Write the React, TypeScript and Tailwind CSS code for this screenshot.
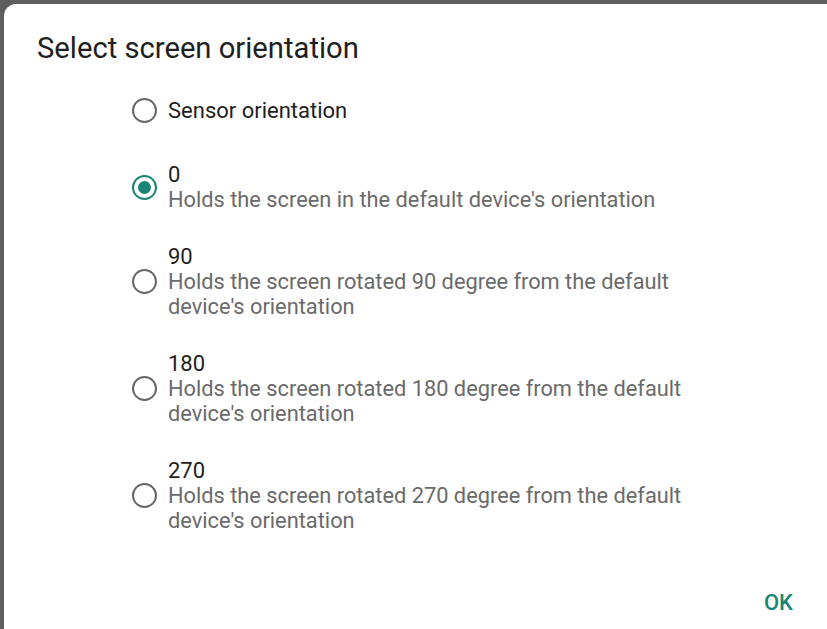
import React from "react";

type Item = { title: string; desc?: string; checked?: boolean };

const items: Item[] = [
  { title: "0", desc: "Holds the screen in the default device's orientation", checked: true },
  { title: "90", desc: "Holds the screen rotated 90 degree from the default device's orientation" },
  { title: "180", desc: "Holds the screen rotated 180 degree from the default device's orientation" },
  { title: "270", desc: "Holds the screen rotated 270 degree from the default device's orientation" },
];

function Radio({ checked }: { checked?: boolean }) {
  return (
    <div
      className={
        "w-[25px] h-[25px] shrink-0 rounded-full border-[2.5px] flex items-center justify-center " +
        (checked ? "border-[#1a8574]" : "border-[#676767]")
      }
    >
      {checked && <div className="w-[13px] h-[13px] rounded-full bg-[#1a8574]" />}
    </div>
  );
}

export default function App() {
  return (
    <div
      className="w-[827px] h-[629px] bg-[#5e5e5e] pt-[4px] pl-[4px] overflow-hidden"
      style={{ fontFamily: "Roboto, 'Noto Sans', sans-serif" }}
    >
      <div className="w-full h-[640px] bg-white rounded-tl-[12px] rounded-bl-[12px] flex flex-col">
        <div className="pl-[33px] pt-[27px] text-[29.2px] leading-[34px] text-[#202020]">
          Select screen orientation
        </div>
        <div className="pl-[128px] pr-[40px] flex flex-col">
          <div className="h-[71px] mt-[10px] flex items-center gap-[11px]">
            <Radio />
            <div className="text-[22px] leading-[25px] text-[#1e1e1e]">Sensor orientation</div>
          </div>
          {items.map((it) => (
            <div key={it.title} className="py-[16px] flex items-center gap-[11px]">
              <Radio checked={it.checked} />
              <div className="flex flex-col max-w-[530px]">
                <div className="text-[22px] leading-[25px] text-[#1e1e1e]">{it.title}</div>
                <div className="text-[21.8px] leading-[25px] text-[#6a6a6a]">{it.desc}</div>
              </div>
            </div>
          ))}
        </div>
        <div className="flex justify-end pr-[34px] mt-[41px]">
          <div className="text-[22px] font-medium text-[#1a8574] leading-[25px]">OK</div>
        </div>
      </div>
    </div>
  );
}
